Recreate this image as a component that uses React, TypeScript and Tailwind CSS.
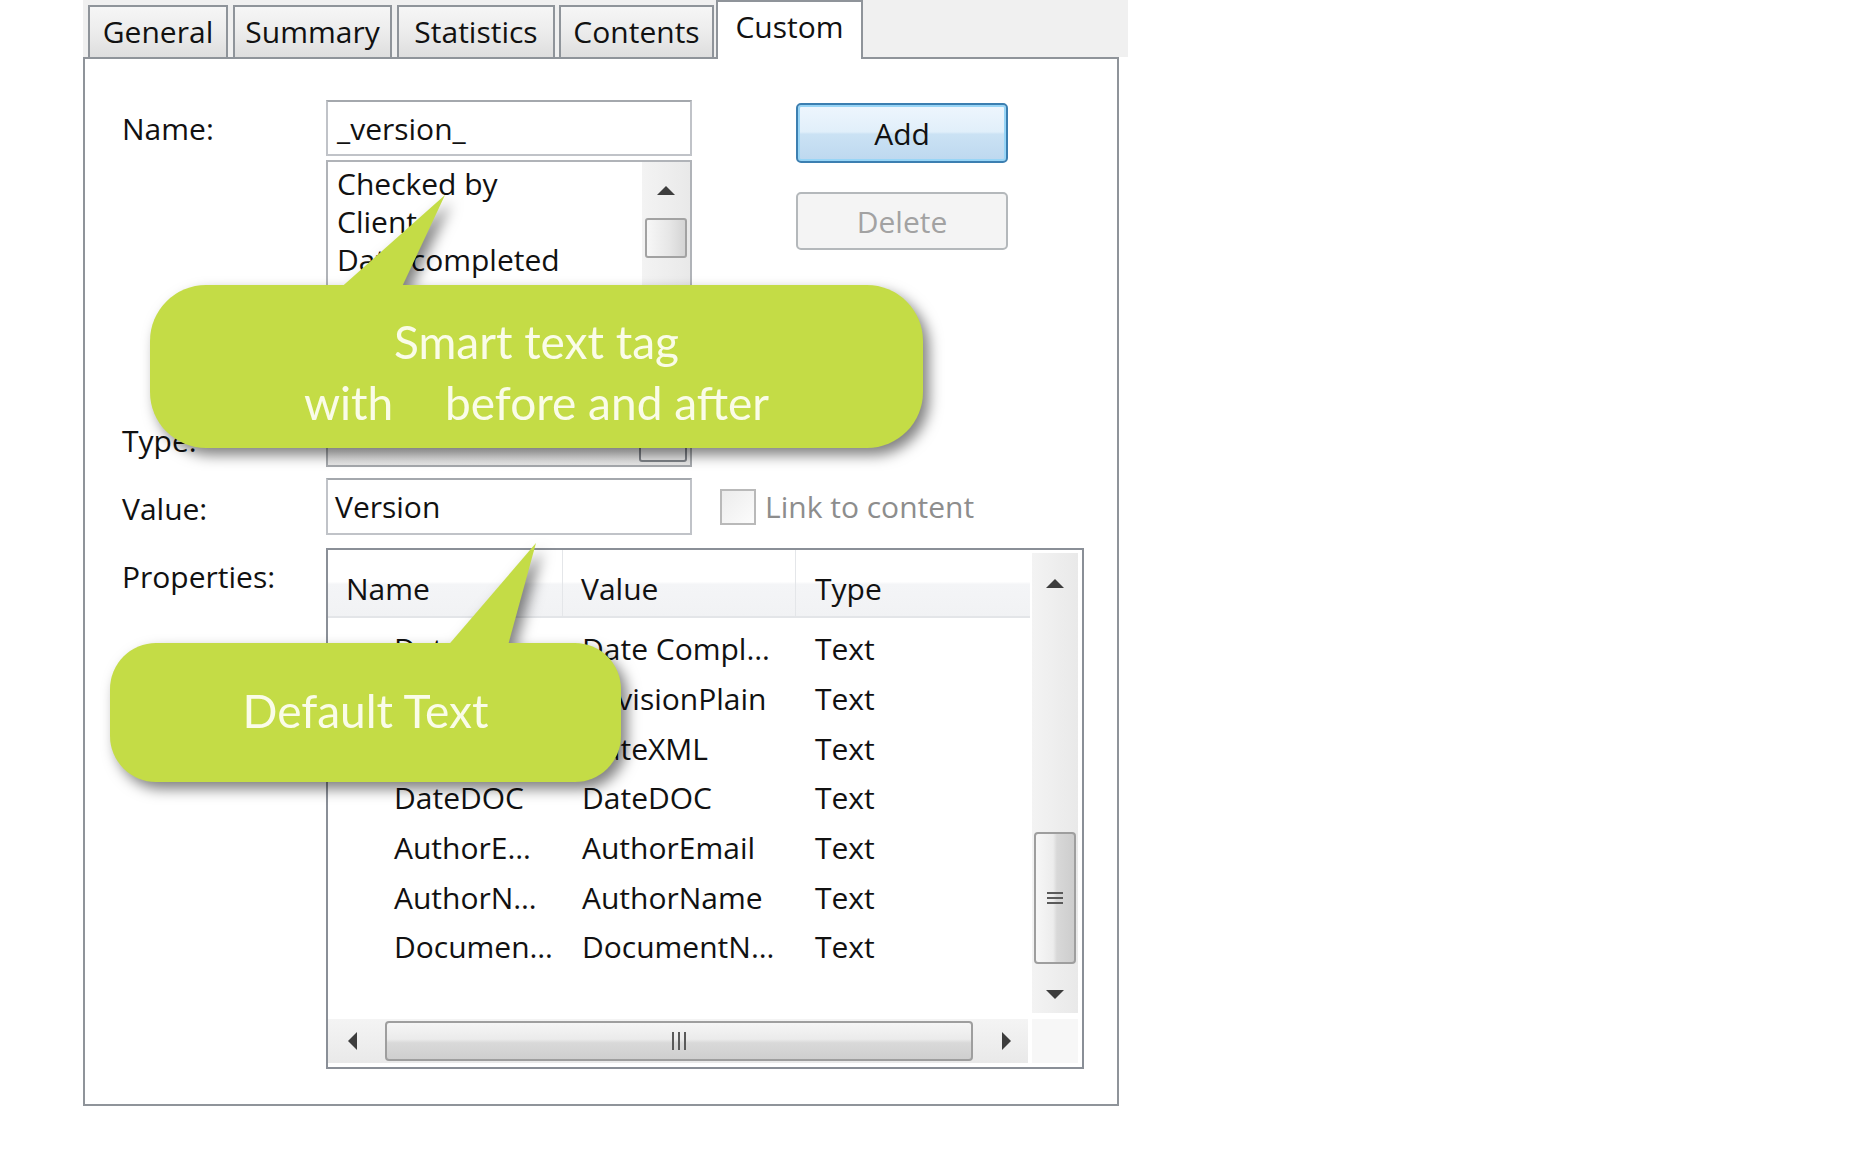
import React from "react"

const rows: [string, string][] = [
  ["DateCo…", "Date Compl…"],
  ["Revisio…", "RevisionPlain"],
  ["DateXML", "DateXML"],
  ["DateDOC", "DateDOC"],
  ["AuthorE…", "AuthorEmail"],
  ["AuthorN…", "AuthorName"],
  ["Documen…", "DocumentN…"],
]

const tabs = [
  { label: "General", cls: "w-[140px] mr-[5px]" },
  { label: "Summary", cls: "w-[159px] mr-[5px]" },
  { label: "Statistics", cls: "w-[158px] mr-[4px]" },
  { label: "Contents", cls: "w-[155px] mr-[2px]" },
]

type Dir = "up" | "down" | "left" | "right"

function Tri({ dir }: { dir: Dir }) {
  const vertical = dir === "up" || dir === "down"
  const pts = {
    up: "10,1 19,10 1,10",
    down: "1,1 19,1 10,10",
    left: "10,1 10,19 1,10",
    right: "1,1 1,19 10,10",
  }[dir]
  return (
    <svg
      viewBox={vertical ? "0 0 20 11" : "0 0 11 20"}
      className={vertical ? "h-[11px] w-[20px]" : "h-[20px] w-[11px]"}>
      <polygon points={pts} fill="#3d3d3d" />
    </svg>
  )
}

function Grip({ vertical }: { vertical?: boolean }) {
  return vertical ? (
    <div className="flex flex-col gap-[3px]">
      <div className="h-[2px] w-[16px] bg-[#5a5a5a]" />
      <div className="h-[2px] w-[16px] bg-[#5a5a5a]" />
      <div className="h-[2px] w-[16px] bg-[#5a5a5a]" />
    </div>
  ) : (
    <div className="flex gap-[4px]">
      <div className="h-[18px] w-[2px] bg-[#5a5a5a]" />
      <div className="h-[18px] w-[2px] bg-[#5a5a5a]" />
      <div className="h-[18px] w-[2px] bg-[#5a5a5a]" />
    </div>
  )
}

function Field({ children, cls }: { children?: React.ReactNode; cls: string }) {
  return (
    <div
      className={`flex w-[366px] items-center border-2 border-[#c0c3c8] border-t-[#a4a8ad] bg-white ${cls}`}>
      {children}
    </div>
  )
}

function Callout1() {
  return (
    <div className="absolute left-[150px] top-[195px] h-[253px] w-[773px] [filter:drop-shadow(6px_7px_7px_rgba(0,0,0,0.5))]">
      <svg viewBox="0 0 773 96" className="absolute left-0 top-0 h-[96px] w-[773px]">
        <polygon points="187,96 295,0 250,96" fill="#c4dc46" />
      </svg>
      <div className="absolute left-0 top-[90px] h-[163px] w-[773px] rounded-[56px] bg-[#c4dc46] pt-[26px] text-center font-['Lato',sans-serif] text-[46px] leading-[61px] text-[#fafce8]">
        <div>Smart text tag</div>
        <div>
          with<span className="inline-block w-[40px]" /> before and after
        </div>
      </div>
    </div>
  )
}

function Callout2() {
  return (
    <div className="absolute left-[110px] top-[543px] h-[239px] w-[511px] [filter:drop-shadow(6px_7px_7px_rgba(0,0,0,0.5))]">
      <svg viewBox="0 0 511 106" className="absolute left-0 top-0 h-[106px] w-[511px]">
        <polygon points="335,106 426,0 397,106" fill="#c4dc46" />
      </svg>
      <div className="absolute left-0 top-[100px] flex h-[139px] w-[511px] items-center justify-center rounded-[46px] bg-[#c4dc46] pb-[4px] font-['Lato',sans-serif] text-[46px] text-[#fafce8]">
        Default Text
      </div>
    </div>
  )
}

export default function App() {
  return (
    <div className="relative h-[1152px] w-[1868px] overflow-hidden bg-white font-['Open_Sans',sans-serif] text-[30px] text-[#111111]">
      <div className="ml-[83px] w-[1045px]">
        {/* tab strip */}
        <div className="flex h-[57px] items-end bg-[#f0f0f0] pl-[5px]">
          {tabs.map((t) => (
            <div
              key={t.label}
              className={`flex h-[52px] items-center justify-center border-2 border-b-0 border-[#8f949a] bg-[linear-gradient(#f6f6f6_0%,#ececec_50%,#dedede_100%)] pb-[2px] ${t.cls}`}>
              {t.label}
            </div>
          ))}
          <div className="relative z-10 -mb-[2px] flex h-[59px] w-[147px] items-center justify-center border-2 border-b-0 border-[#8f949a] bg-white pb-[8px]">
            Custom
          </div>
        </div>

        {/* panel */}
        <div className="h-[1049px] w-[1036px] border-2 border-[#8f949a] bg-white pl-[37px] pt-[41px]">
          <div className="flex">
            <div className="flex h-[56px] w-[204px] items-center">Name:</div>
            <div className="flex w-[366px] flex-col">
              <Field cls="h-[56px] pl-[9px]">_version_</Field>
              <div className="mt-[4px] flex h-[245px] border-2 border-[#b0b3b8] bg-white">
                <div className="flex-1 pl-[9px] pt-[3px] leading-[38px]">
                  <div>Checked by</div>
                  <div>Client</div>
                  <div>Date completed</div>
                  <div>Department</div>
                  <div>Destination</div>
                  <div>Disposition</div>
                </div>
                <div className="flex w-[48px] flex-col items-center bg-[linear-gradient(90deg,#f3f3f3,#e9e9e9)]">
                  <div className="flex h-[56px] items-center">
                    <Tri dir="up" />
                  </div>
                  <div className="h-[40px] w-[42px] rounded-[3px] border-2 border-[#a2a2a2] bg-[linear-gradient(90deg,#f7f7f7,#e6e6e6_60%,#d4d4d4)]" />
                </div>
              </div>
            </div>
            <div className="ml-[104px] flex flex-col">
              <div className="mt-[3px] flex h-[60px] w-[212px] items-center justify-center rounded-[5px] border-2 border-[#3c7fb1] bg-[linear-gradient(#eef6fd_0%,#e1effa_48%,#cbe2f4_52%,#bdd8ef_100%)] shadow-[inset_0_0_0_2px_#98d5f6]">
                Add
              </div>
              <div className="mt-[29px] flex h-[58px] w-[212px] items-center justify-center rounded-[5px] border-2 border-[#b4b8bb] bg-[#f4f4f4] text-[#a2a2a2]">
                Delete
              </div>
            </div>
          </div>

          <div className="mt-[8px] flex">
            <div className="flex h-[54px] w-[204px] items-center">Type:</div>
            <div className="flex h-[54px] w-[366px] border-2 border-[#a6a9ad] bg-[linear-gradient(#f7f7f7,#e8e8e8)] p-[3px]">
              <div className="flex-1" />
              <div className="flex w-[48px] items-center justify-center rounded-[3px] border-2 border-[#80848a] bg-[#ececec]">
                <Tri dir="down" />
              </div>
            </div>
          </div>

          <div className="mt-[11px] flex items-center">
            <div className="w-[204px] pt-[3px]">Value:</div>
            <Field cls="h-[57px] pl-[7px]">Version</Field>
            <div className="ml-[28px] h-[36px] w-[36px] border-2 border-[#b9b9b9] bg-[linear-gradient(135deg,#ececec,#fcfcfc)]" />
            <div className="ml-[9px] text-[#8d8d8d]">Link to content</div>
          </div>

          <div className="mt-[13px] flex">
            <div className="w-[204px] pt-[9px] leading-[40px]">Properties:</div>
            <div className="flex h-[521px] w-[758px] border-2 border-[#8a8f97] bg-white">
              <div className="flex w-[702px] flex-col">
                <div className="flex h-[68px] border-b-2 border-[#e3e5e8] bg-[linear-gradient(#ffffff_0%,#ffffff_48%,#f4f5f7_52%,#f1f2f4_100%)]">
                  <div className="flex w-[235px] items-center border-r border-[#e4e6e9] pl-[18px] pt-[10px]">
                    Name
                  </div>
                  <div className="flex w-[233px] items-center border-r border-[#e4e6e9] pl-[18px] pt-[10px]">
                    Value
                  </div>
                  <div className="flex w-[234px] items-center pl-[19px] pt-[10px]">Type</div>
                </div>
                <div className="h-[401px] pt-[6px]">
                  {rows.map(([n, v]) => (
                    <div key={n} className="flex h-[49.7px] items-center">
                      <div className="w-[235px] pl-[66px]">{n}</div>
                      <div className="w-[233px] pl-[19px]">{v}</div>
                      <div className="w-[234px] pl-[19px]">Text</div>
                    </div>
                  ))}
                </div>
                <div className="flex h-[44px] w-[700px] items-center bg-[linear-gradient(#f4f4f4,#e9e9e9)]">
                  <div className="flex w-[48px] justify-center">
                    <Tri dir="left" />
                  </div>
                  <div className="ml-[9px] flex h-[40px] w-[588px] items-center justify-center rounded-[4px] border-2 border-[#9e9e9e] bg-[linear-gradient(#f5f5f5_0%,#ebebeb_45%,#d9d9d9_55%,#cfcfcf_100%)]">
                    <Grip />
                  </div>
                  <div className="ml-[28px]">
                    <Tri dir="right" />
                  </div>
                </div>
              </div>
              <div className="w-[52px] pl-[2px] pr-[4px] pt-[3px]">
                <div className="flex h-[460px] w-[46px] flex-col items-center bg-[linear-gradient(90deg,#f3f3f3,#e9e9e9)]">
                  <div className="flex h-[60px] items-center">
                    <Tri dir="up" />
                  </div>
                  <div className="mt-[219px] flex h-[132px] w-[42px] items-center justify-center rounded-[4px] border-2 border-[#9e9e9e] bg-[linear-gradient(90deg,#f7f7f7_0%,#ececec_45%,#d8d8d8_55%,#cdcdcd_100%)]">
                    <Grip vertical />
                  </div>
                  <div className="mt-[25px]">
                    <Tri dir="down" />
                  </div>
                </div>
                <div className="mt-[6px] h-[44px] w-[46px] bg-[#f7f7f7]" />
              </div>
            </div>
          </div>
        </div>
      </div>

      <Callout1 />
      <Callout2 />
    </div>
  )
}
